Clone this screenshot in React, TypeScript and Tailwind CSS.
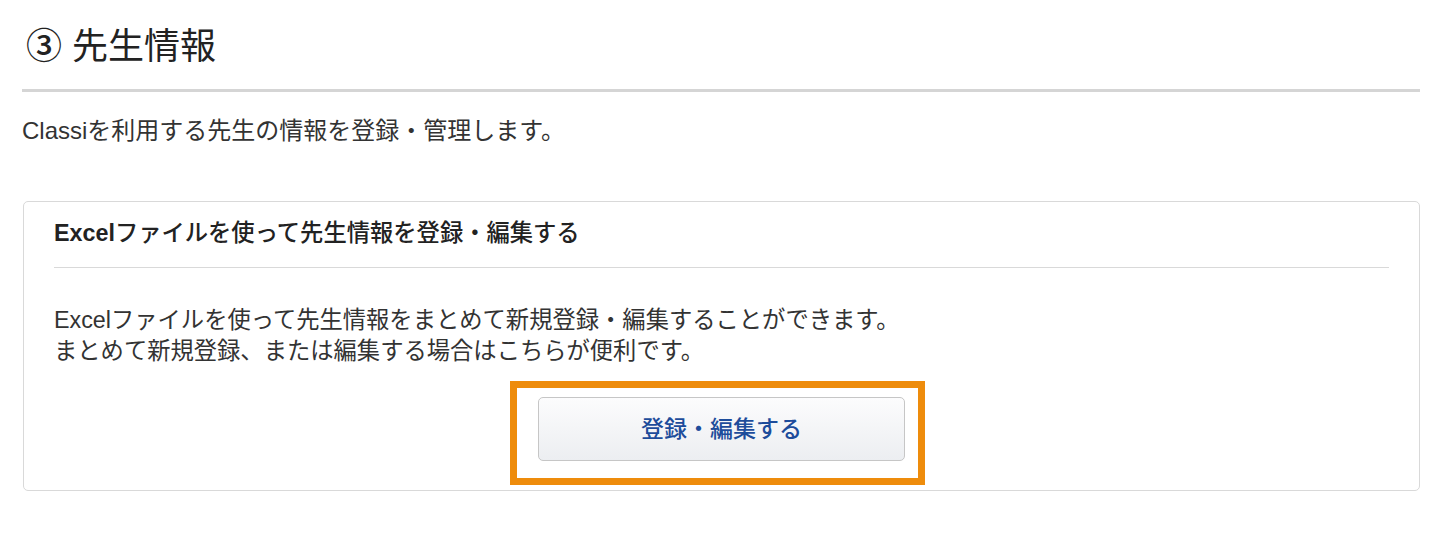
import React from "react";

const font = {
  fontFamily: '"Liberation Sans", "Noto Sans CJK JP", sans-serif',
};

export default function App() {
  return (
    <div className="min-h-[534px] w-full bg-white text-[#333]" style={font}>
      <div className="pl-[22px] pr-[24px]">
        {/* Section title */}
        <div className="border-b-[3px] border-[#d5d5d5] pb-[15px] pt-[20px]">
          <h1 className="pl-[4px] text-[36px] font-normal leading-[54px] text-[#222]">
            <span className="font-medium">③</span> 先生情報
          </h1>
        </div>

        <p className="mt-[22px] text-[24px] leading-[34px]">
          Classiを利用する先生の情報を登録・管理します。
        </p>

        {/* Excel import card */}
        <div className="ml-[1px] mt-[53px] rounded-[5px] border border-[#d9d9d9] px-[30px] pb-[29px] pt-[14px]">
          <h2 className="border-b border-[#d9d9d9] pb-[17px] text-[23.3px] font-medium leading-[34px] text-[#222]">
            <span className="font-bold">Excel</span>ファイルを使って先生情報を登録・編集する
          </h2>

          <div className="mt-[37px] text-[23.3px] leading-[31px]">
            <p>Excelファイルを使って先生情報をまとめて新規登録・編集することができます。</p>
            <p>まとめて新規登録、または編集する場合はこちらが便利です。</p>
          </div>

          <div className="mt-[30px] flex justify-center">
            <div className="relative">
              <button
                type="button"
                className="flex h-[64px] w-[367px] items-center justify-center rounded-[5px] border border-[#c6c6c6] bg-gradient-to-b from-[#fcfcfd] to-[#eceef1] text-[23px] font-medium text-[#1d4c9b]"
                style={font}
              >
                登録・編集する
              </button>
              {/* highlight frame drawn over the button */}
              <div className="pointer-events-none absolute left-[-28px] right-[-20px] top-[-16px] bottom-[-24px] border-[7px] border-[#ee8c0c]" />
            </div>
          </div>
        </div>
      </div>
    </div>
  );
}
